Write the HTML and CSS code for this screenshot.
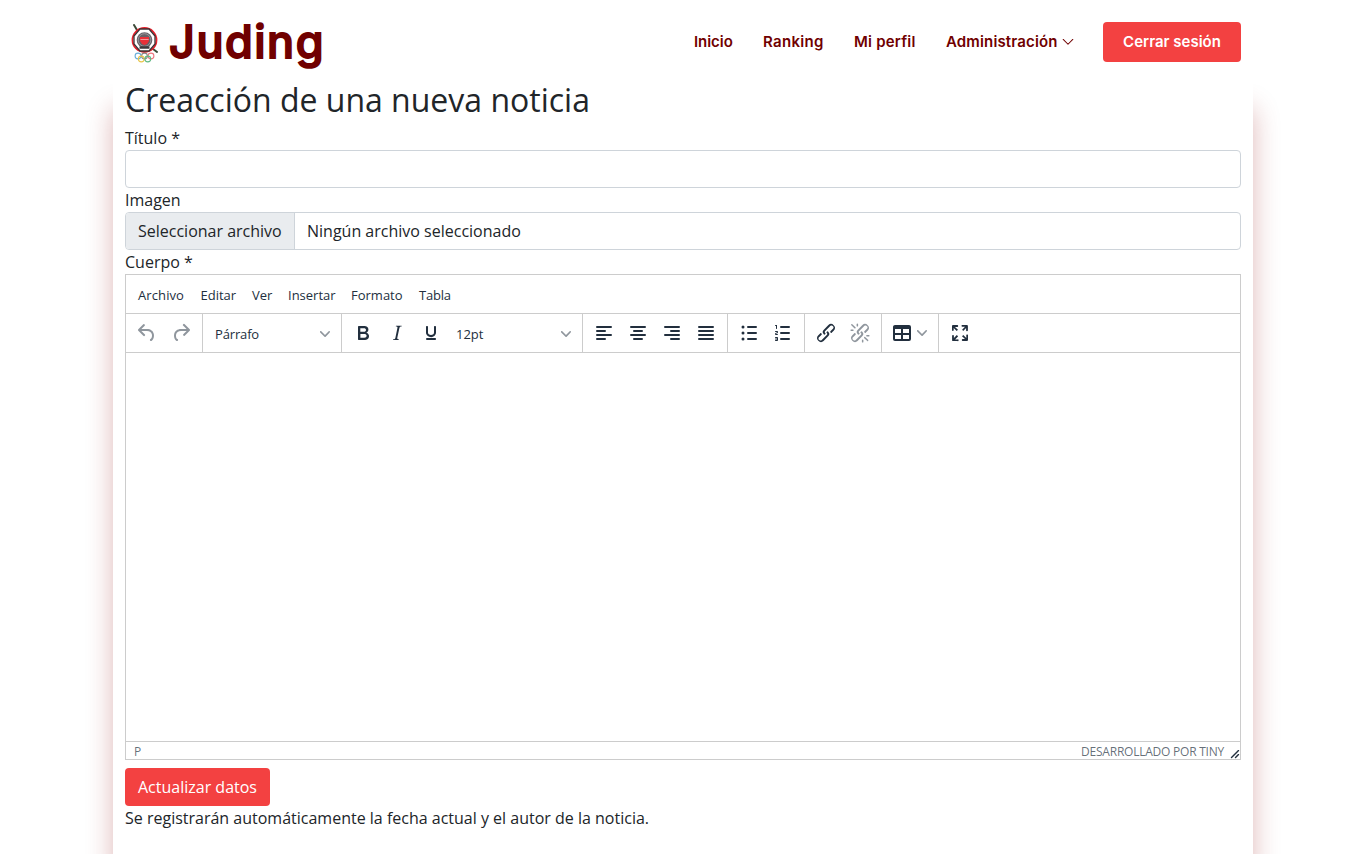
FILE: index.html
```html
<!DOCTYPE html>
<html lang="es">
<head>
<meta charset="utf-8">
<title>Juding</title>
<link rel="stylesheet" href="styles.css">
</head>
<body>
<header class="header">
  <a class="logo">
    <svg class="crest" width="30" height="40" viewBox="0 0 30 40">
      <path d="M4 1l3 5M23 25l4 3" stroke="#3c4a38" stroke-width="2" stroke-linecap="round"/>
      <circle cx="14.500" cy="16" r="12" fill="#fff" stroke="#e5202b" stroke-width="1.800"/>
      <path d="M10 5h9l6 7v8l-6 7h-9l-6-7v-8z" fill="#fff" stroke="#3a3033" stroke-width="1.300"/>
      <circle cx="14.500" cy="16" r="7.800" fill="#666167"/>
      <circle cx="14.500" cy="16" r="6.300" fill="none" stroke="#a5a0a5" stroke-width=".8"/>
      <path d="M10 13h9v4q-1 3-4.500 4-3.500-1-4.500-4z" fill="#e83038"/>
      <path d="M10.500 16l1-1 1 1 1-1 1 1 1-1 1 1 1-1 1 1" fill="none" stroke="#fff" stroke-width=".6"/>
      <path d="M9.500 23.500h10" stroke="#3b393b" stroke-width="2.500"/>
      <g fill="none" stroke-width="1.100">
        <circle cx="8" cy="32" r="2.900" stroke="#6aaed8"/>
        <circle cx="14.500" cy="32" r="2.900" stroke="#888"/>
        <circle cx="21" cy="32" r="2.900" stroke="#ee7680"/>
        <circle cx="11.300" cy="35" r="2.900" stroke="#e8c64c"/>
        <circle cx="17.800" cy="35" r="2.900" stroke="#62b985"/>
      </g>
    </svg>
    <span class="brand">Juding</span>
  </a>
  <nav class="nav">
    <a class="n1">Inicio</a><a class="n2">Ranking</a><a class="n3">Mi perfil</a>
    <a class="n4"><span class="admin">Administración</span><svg width="12" height="12" viewBox="0 0 16 16"><path d="M1.600 4.600 8 11l6.400-6.400" fill="none" stroke="#700000" stroke-width="1.400" stroke-linecap="round" stroke-linejoin="round"/></svg></a>
    <a class="logout"><span>Cerrar sesión</span></a>
  </nav>
</header>
<main class="main">
  <h2 class="title">Creacción de una nueva noticia</h2>
  <label class="label">Título *</label>
  <input class="text-input" type="text">
  <label class="label">Imagen</label>
  <div class="file"><span class="file-btn">Seleccionar archivo</span><span class="file-name">Ningún archivo seleccionado</span></div>
  <label class="label">Cuerpo *</label>
  <div class="editor">
    <div class="menubar"><span class="m1">Archivo</span><span class="m2">Editar</span><span class="m3">Ver</span><span class="m4">Insertar</span><span class="m5">Formato</span><span class="m6">Tabla</span></div>
    <div class="toolbar">
      <div class="group off">
        <b><svg class="ic"><path d="M6.400 8H12c3.700 0 6.200 2 6.800 5.100.6 2.700-.4 5.600-2.300 6.800a1 1 0 0 1-1-1.800c1.100-.6 1.800-2.700 1.400-4.600-.5-2.100-2.100-3.500-4.900-3.500H6.400l3.300 3.300a1 1 0 1 1-1.400 1.400l-5-5a1 1 0 0 1 0-1.400l5-5a1 1 0 0 1 1.400 1.400L6.400 8Z"/></svg></b>
        <b><svg class="ic"><path d="M17.600 10H12c-2.800 0-4.400 1.400-4.900 3.500-.4 2 .3 4 1.400 4.600a1 1 0 1 1-1 1.800c-2-1.200-2.900-4.100-2.300-6.800.6-3 3-5.100 6.800-5.100h5.600l-3.300-3.300a1 1 0 1 1 1.400-1.400l5 5a1 1 0 0 1 0 1.400l-5 5a1 1 0 0 1-1.400-1.400l3.300-3.300Z"/></svg></b>
      </div>
      <div class="group"><div class="select"><span class="s1">Párrafo</span><svg class="chev" viewBox="0 0 10 10"><path d="M8.700 2.200c.3-.3.8-.3 1 0 .4.4.4.9 0 1.200L5.700 7.800c-.3.3-.9.3-1.200 0L.2 3.400a.8.8 0 0 1 0-1.200c.3-.3.8-.3 1.100 0L5 6l3.700-3.800Z"/></svg></div></div>
      <div class="group">
        <b><svg class="ic"><path fill-rule="evenodd" d="M7.800 19c-.3 0-.5 0-.6-.2l-.2-.5V5.700c0-.2 0-.4.2-.5l.6-.2h5c1.500 0 2.700.3 3.500 1 .7.6 1.100 1.400 1.100 2.500a3 3 0 0 1-.6 1.900c-.4.6-1 1-1.600 1.200.4.1.9.3 1.300.6s.8.7 1 1.200c.4.4.5 1 .5 1.600 0 1.300-.4 2.300-1.300 3-.8.7-2.100 1-3.800 1H7.800Zm5-8.300c.6 0 1.200-.1 1.600-.5.4-.3.6-.7.6-1.300 0-1.100-.8-1.700-2.300-1.700H9.300v3.500h3.400Zm.5 6c.7 0 1.300-.1 1.700-.4.4-.4.6-.9.6-1.500s-.2-1-.7-1.400c-.4-.3-1-.4-2-.4H9.400v3.800h4Z"/></svg></b>
        <b><svg class="ic"><path d="m16.700 4.700-.1.9h-.3c-.6 0-1 0-1.400.3-.3.3-.4.6-.5 1.100l-2.100 9.800v.6c0 .5.4.8 1.400.8h.2l-.2.8H8l.2-.8h.2c1.100 0 1.800-.5 2-1.500l2-9.800.1-.5c0-.6-.4-.8-1.400-.8h-.3l.2-.9h5.800Z"/></svg></b>
        <b><svg class="ic"><path d="M16 5c.6 0 1 .4 1 1v5.500a4 4 0 0 1-.4 1.800l-1 1.400a5.300 5.300 0 0 1-5.500 1 5 5 0 0 1-1.600-1c-.5-.4-.8-.9-1.100-1.400a4 4 0 0 1-.4-1.800V6c0-.6.4-1 1-1s1 .4 1 1v5.500c0 .3 0 .6.2 1l.6.7a3.300 3.300 0 0 0 2.200.8 3.400 3.400 0 0 0 2.200-.8c.3-.2.4-.5.6-.8l.2-.9V6c0-.6.4-1 1-1ZM8 17h8c.6 0 1 .4 1 1s-.4 1-1 1H8a1 1 0 0 1 0-2Z"/></svg></b>
        <div class="select"><span class="s2">12pt</span><svg class="chev" viewBox="0 0 10 10"><path d="M8.700 2.200c.3-.3.8-.3 1 0 .4.4.4.9 0 1.200L5.700 7.800c-.3.3-.9.3-1.200 0L.2 3.400a.8.8 0 0 1 0-1.200c.3-.3.8-.3 1.100 0L5 6l3.700-3.800Z"/></svg></div>
      </div>
      <div class="group">
        <b><svg class="ic"><path class="bar" d="M5 6h14M5 10h8M5 14h14M5 18h8"/></svg></b>
        <b><svg class="ic"><path class="bar" d="M5 6h14M8 10h8M5 14h14M8 18h8"/></svg></b>
        <b><svg class="ic"><path class="bar" d="M5 6h14M11 10h8M5 14h14M11 18h8"/></svg></b>
        <b><svg class="ic"><path class="bar" d="M5 6h14M5 10h14M5 14h14M5 18h14"/></svg></b>
      </div>
      <div class="group">
        <b><svg class="ic"><path class="bar" d="M11 6h8M11 12h8M11 18h8"/><circle cx="6" cy="6" r="1.500"/><circle cx="6" cy="12" r="1.500"/><circle cx="6" cy="18" r="1.500"/></svg></b>
        <b><svg class="ic"><path class="bar" d="M10 6h8M10 12h8M10 18h8"/><path d="M6 4v3.500c0 .3-.2.5-.5.5a.5.5 0 0 1-.5-.5V5h-.5a.5.5 0 0 1 0-1H6Zm-1 8.800.2.200h1.300c.3 0 .5.2.5.500s-.2.500-.5.500H4.900a1 1 0 0 1-.9-1V13c0-.4.3-.8.6-1l1.200-.4.2-.3a.2.200 0 0 0-.2-.2H4.500a.5.500 0 0 1-.5-.5c0-.3.2-.5.5-.5h1.600c.5 0 .9.400.9 1v.1c0 .4-.3.800-.6 1l-1.200.4-.2.3ZM7 17v2c0 .6-.4 1-1 1H4.500a.5.500 0 0 1 0-1h1.200c.2 0 .3-.1.300-.3 0-.2-.1-.3-.3-.3H4.400a.4.400 0 1 1 0-.8h1.300c.2 0 .3-.1.300-.3 0-.2-.1-.3-.3-.3H4.500a.5.500 0 1 1 0-1H6c.6 0 1 .4 1 1Z"/></svg></b>
      </div>
      <div class="group">
        <b><svg class="ic"><path d="M6.200 12.300a1 1 0 0 1 1.400 1.400l-2 2a2 2 0 1 0 2.600 2.800l4.800-4.800a1 1 0 0 0 0-1.400 1 1 0 1 1 1.400-1.300 2.900 2.900 0 0 1 0 4L9.600 20a3.900 3.900 0 0 1-5.500-5.500l2-2Zm11.600-.6a1 1 0 0 1-1.400-1.400l2-2a2 2 0 1 0-2.600-2.800L11 10.300a1 1 0 0 0 0 1.400A1 1 0 1 1 9.600 13a2.900 2.900 0 0 1 0-4L14.400 4a3.900 3.900 0 0 1 5.500 5.500l-2 2Z"/></svg></b>
        <b class="off"><svg class="ic"><path d="M6.200 12.300a1 1 0 0 1 1.400 1.400l-2 2a2 2 0 1 0 2.600 2.800l4.800-4.800a1 1 0 0 0 0-1.400 1 1 0 1 1 1.400-1.300 2.900 2.900 0 0 1 0 4L9.600 20a3.900 3.900 0 0 1-5.500-5.500l2-2Zm11.600-.6a1 1 0 0 1-1.400-1.400l2-2a2 2 0 1 0-2.600-2.800L11 10.300a1 1 0 0 0 0 1.400A1 1 0 1 1 9.600 13a2.900 2.900 0 0 1 0-4L14.400 4a3.900 3.900 0 0 1 5.500 5.500l-2 2Z"/><path d="M7.600 6.300a.8.8 0 0 1-1 1.100L3.300 4.200a.7.7 0 1 1 1-1l3.200 3.100ZM5.100 8.600a.8.8 0 0 1 0 1.500H3a.8.8 0 0 1 0-1.500H5Zm5-3.500a.8.8 0 0 1-1.500 0V3a.8.8 0 0 1 1.500 0V5Zm6 11.800a.8.8 0 0 1 1-1l3.200 3.200a.8.8 0 0 1-1 1L16 17Zm-2.200 2a.8.8 0 0 1 1.500 0V21a.8.8 0 0 1-1.500 0V19Zm5-3.500a.7.7 0 1 1 0-1.500H21a.8.8 0 0 1 0 1.500H19Z"/></svg></b>
      </div>
      <div class="group">
        <b class="wide"><svg class="ic"><path fill-rule="evenodd" d="M19 4a2 2 0 0 1 2 2v12a2 2 0 0 1-2 2H5a2 2 0 0 1-2-2V6c0-1.100.9-2 2-2h14ZM5 14v4h6v-4H5Zm14 0h-6v4h6v-4Zm0-6h-6v4h6V8ZM5 12h6V8H5v4Z"/></svg><svg class="chev" viewBox="0 0 10 10"><path d="M8.700 2.200c.3-.3.8-.3 1 0 .4.4.4.9 0 1.200L5.700 7.800c-.3.3-.9.3-1.200 0L.2 3.400a.8.8 0 0 1 0-1.200c.3-.3.8-.3 1.100 0L5 6l3.700-3.800Z"/></svg></b>
      </div>
      <div class="group last">
        <b><svg class="ic"><path d="m15.300 10-1.200-1.300 2.900-3h-2.300a.9.9 0 1 1 0-1.700H19c.5 0 .9.400.9.900v4.400a.9.9 0 1 1-1.800 0V7l-2.900 3Zm0 4 3 3v-2.300a.9.9 0 1 1 1.700 0V19c0 .5-.4.900-.9.900h-4.400a.9.9 0 1 1 0-1.800H17l-3-2.900 1.300-1.200ZM10 15.400l-2.900 3h2.300a.9.9 0 1 1 0 1.700H5a.9.9 0 0 1-.9-.9v-4.400a.9.9 0 1 1 1.800 0V17l2.900-3 1.200 1.300ZM8.700 10 5.700 7v2.300a.9.9 0 0 1-1.700 0V5c0-.5.4-.9.9-.9h4.400a.9.9 0 0 1 0 1.800H7l3 2.900-1.300 1.200Z"/></svg></b>
      </div>
    </div>
    <div class="canvas"></div>
    <div class="status"><span>P</span><span class="tiny">DESARROLLADO POR TINY</span><svg class="resize" width="10" height="10" viewBox="0 0 10 10"><path d="M8.100 1.100A.5.5 0 1 1 9 2l-7 7A.5.5 0 1 1 1 8l7-7ZM8.100 5.100A.5.5 0 1 1 9 6l-3 3A.5.5 0 1 1 5 8l3-3Z"/></svg></div>
  </div>
  <button class="submit"><span>Actualizar datos</span></button>
  <p class="note">Se registrarán automáticamente la fecha actual y el autor de la noticia.</p>
</main>
</body>
</html>
```
FILE: styles.css
```css
* { box-sizing: border-box; }
html, body { height: 100%; }
body { margin: 0; display: flex; flex-direction: column; overflow: hidden; background: #fff; color: #212529; font: 16px/24px "Open Sans", sans-serif; }
.header { position: relative; z-index: 1; flex: none; height: 84px; padding: 0 125px; display: flex; align-items: center; justify-content: space-between; background: #fff; }
.logo { display: flex; align-items: center; height: 84px; }
.crest { margin: 3px 9px 0 5px; }
.brand { font: 500 45px/60px Inter, sans-serif; letter-spacing: 1.5px; color: #700000; -webkit-text-stroke: 1.8px #700000; stroke-linejoin: round; }
.nav { display: flex; align-items: center; font: 600 15px/24px Inter, sans-serif; color: #700000; white-space: nowrap; }
.nav a { margin-right: 30px; }
.n1 { width: 39px; letter-spacing: -.05px; }
.n2 { width: 61px; letter-spacing: .3px; }
.n3 { width: 62px; letter-spacing: .2px; }
.nav .n4 { display: flex; align-items: center; margin-right: 29px; }
.admin { width: 116px; letter-spacing: .15px; }
.nav .logout { margin: 0; width: 138px; height: 40px; line-height: 40px; text-align: center; border-radius: 4px; background: #f34141; color: #fff; }
.main { flex: 1; margin: 0 113px; padding: 0 12px; display: flex; flex-direction: column; background: #fff; box-shadow: 0 25px 25px rgba(150, 20, 20, .3); }
.title { margin: -3px 0 7px; font-size: 32px; line-height: 38px; font-weight: 400; }
.label { height: 24px; }
.text-input, .file { width: 100%; height: 38px; flex: none; border: 1px solid #ced4da; border-radius: 4px; background: #fff; }
.file { display: flex; line-height: 36px; overflow: hidden; }
.file-btn { width: 169px; padding-left: 12px; background: #e9ecef; border-right: 1px solid #ced4da; }
.file-name { padding-left: 12px; }
.editor { flex: none; height: 486px; border: 1px solid #ccc; display: flex; flex-direction: column; color: #222f3e; }
.menubar { height: 39px; padding: 2px 12px 0; display: flex; align-items: center; border-bottom: 1px solid #ccc; font-size: 13px; }
.m1 { width: 62.5px; letter-spacing: .1px; }
.m2 { width: 51.5px; }
.m3 { width: 36px; }
.m4 { width: 63px; }
.m5 { width: 68px; }
.m6 { letter-spacing: -.2px; }
.toolbar { height: 39px; display: flex; border-bottom: 1px solid #ccc; }
.group { display: flex; align-items: center; padding: 0 4px; border-right: 1px solid #ccc; }
.group.last { border: 0; }
.group b { width: 34px; height: 34px; display: flex; align-items: center; justify-content: center; }
.group .wide { width: 48px; gap: 3px; padding-right: 3px; }
.ic { width: 24px; height: 24px; flex: none; fill: #222f3e; }
.bar { fill: none; stroke: #222f3e; stroke-width: 2; stroke-linecap: round; }
.off .ic { fill: #222f3e; opacity: .5; }
.chev { width: 10px; height: 10px; flex: none; fill: #222f3e; opacity: .5; }
.select { width: 130px; height: 34px; padding: 2px 7px 0 8px; display: flex; align-items: center; justify-content: space-between; font-size: 13px; }
.s1 { letter-spacing: -.15px; }
.canvas { flex: 1; }
.status { height: 18px; padding: 0 0 0 8px; display: flex; align-items: center; border-top: 1px solid #ccc; font-size: 12px; line-height: 14px; color: #222f3eb3; }
.status span { padding-top: 3px; }
.status .tiny { margin-left: auto; letter-spacing: -.23px; }
.resize { margin: 7px 0 0 6px; fill: #222f3e; }
.submit { flex: none; margin-top: 8px; width: 145px; height: 38px; padding: 0; border: 0; border-radius: 4px; background: #f34141; color: #fff; font: 16px/38px "Open Sans", sans-serif; white-space: nowrap; }
.note { margin: 0; }
```
